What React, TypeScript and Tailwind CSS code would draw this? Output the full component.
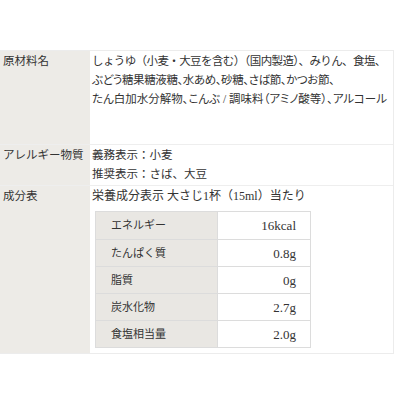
const font = { fontFamily: '"Liberation Serif", "Noto Sans CJK JP", serif' }

const nutrition = [
  ['エネルギー', '16kcal'],
  ['たんぱく質', '0.8g'],
  ['脂質', '0g'],
  ['炭水化物', '2.7g'],
  ['食塩相当量', '2.0g'],
]

export default function App() {
  return (
    <div className="w-[400px] h-[400px] bg-white pt-[50px] text-[#333]" style={font}>
      <div className="w-[394px] border-t border-r border-b border-[#ececec] text-[11.5px] leading-[19px]">
        <div className="grid grid-cols-[90px_1fr] border-b border-[#eeeeee]">
          <div className="bg-[#edebe7] pl-[3px] pt-[1px]">原材料名</div>
          <div className="pl-[2px] pt-[1px] pb-[35px] whitespace-nowrap">
            <div className="tracking-[-0.6px]">しょうゆ（小麦・大豆を含む）（国内製造）、みりん、食塩、</div>
            <div className="tracking-[-0.4px] [font-feature-settings:'palt']">ぶどう糖果糖液糖、水あめ、砂糖、さば節、かつお節、</div>
            <div className="[font-feature-settings:'palt']">たん白加水分解物、こんぶ / 調味料（アミノ酸等）、アルコール</div>
          </div>
        </div>
        <div className="grid grid-cols-[90px_1fr] border-b border-[#eeeeee]">
          <div className="bg-[#edebe7] pl-[3px] pt-[1px] whitespace-nowrap">アレルギー物質</div>
          <div className="pl-[2px] pt-[1px] pb-[1px]">
            義務表示：小麦<br />
            推奨表示：さば、大豆
          </div>
        </div>
        <div className="grid grid-cols-[90px_1fr]">
          <div className="bg-[#edebe7] pl-[3px] pt-[1px]">成分表</div>
          <div className="pl-[2px] pt-[1px] pb-[5px]">
            <div className="text-[12px]">栄養成分表示 大さじ1杯（15ml）当たり</div>
            <div className="mt-[5px] ml-[3px] w-[216px] border border-[#dcdcdc] text-[11px]">
              {nutrition.map(([k, v], i) => (
                <div key={k} className={`grid grid-cols-[122px_1fr] h-[27px] ${i > 0 ? 'border-t border-[#dcdcdc]' : ''}`}>
                  <div className="bg-[#e9e7e3] border-r border-[#dcdcdc] flex items-center pl-[15px]">{k}</div>
                  <div className="flex items-center justify-end pr-[14px] text-[13px]">{v}</div>
                </div>
              ))}
            </div>
          </div>
        </div>
      </div>
    </div>
  )
}
